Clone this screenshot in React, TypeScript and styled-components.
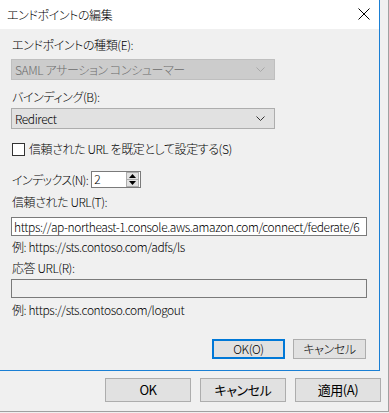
import React from 'react';
import styled, { createGlobalStyle } from 'styled-components';

const GlobalStyle = createGlobalStyle`
  html, body {
    margin: 0;
    padding: 0;
    background: #f0f0f0;
  }
  body {
    font-family: 'Noto Sans CJK JP', 'Noto Sans', sans-serif;
    font-size: 12px;
    font-weight: 300;
    letter-spacing: -0.4px;
    color: #000;
    font-feature-settings: 'palt';
  }
`;

const Screen = styled.div`
  width: 389px;
  height: 413px;
  overflow: hidden;
  background: #f0f0f0;
`;

const ParentWindow = styled.div`
  box-sizing: border-box;
  width: 389px;
  height: 412px;
  border-right: 1px solid #a0a0a0;
  border-bottom: 1px solid #a0a0a0;
  display: flex;
  flex-direction: column;
`;

const Dialog = styled.div`
  box-sizing: border-box;
  width: 380px;
  height: 371px;
  border-right: 1px solid #1a7fd4;
  border-bottom: 1px solid #1a7fd4;
  display: flex;
  flex-direction: column;
  background: #f0f0f0;
`;

const TitleBar = styled.div`
  height: 29px;
  background: #fff;
  display: flex;
  align-items: center;
  justify-content: space-between;
  padding: 0 7px 0 7px;
`;

const Title = styled.span`
  font-size: 12px;
  line-height: 16px;
`;

const CloseButton = styled.span`
  display: flex;
  width: 12px;
  height: 12px;
  margin-right: 2px;
  margin-top: -1px;
`;

const Body = styled.div`
  flex: 1;
  display: flex;
  flex-direction: column;
  padding: 0 12px 0 11px;
`;

const Label = styled.div<{ $top: number }>`
  margin-top: ${(p) => p.$top}px;
  padding-left: 1px;
  height: 16px;
  line-height: 16px;
  white-space: nowrap;
`;

const Combo = styled.div<{ $top: number; $disabled?: boolean }>`
  box-sizing: border-box;
  margin-top: ${(p) => p.$top}px;
  width: 264px;
  height: 21px;
  border: 1px solid ${(p) => (p.$disabled ? '#bfbfbf' : '#adadad')};
  background: ${(p) => (p.$disabled ? '#cccccc' : '#e1e1e1')};
  color: ${(p) => (p.$disabled ? '#6d6d6d' : '#000')};
  display: flex;
  align-items: center;
  justify-content: space-between;
  padding: 0 9px 0 3px;
  line-height: 18px;
  white-space: nowrap;
`;

const CheckRow = styled.label`
  margin-top: 12px;
  height: 16px;
  display: flex;
  align-items: center;
  gap: 4px;
  padding-left: 1px;
  line-height: 16px;
`;

const CheckBox = styled.span`
  box-sizing: border-box;
  width: 13px;
  height: 13px;
  border: 1px solid #333;
  background: #fff;
`;

const IndexRow = styled.div`
  margin-top: 14px;
  display: flex;
  align-items: center;
  gap: 3px;
  padding-left: 1px;
  line-height: 16px;
`;

const IndexLabel = styled.span`
  white-space: nowrap;
  letter-spacing: -0.6px;
`;

const Spin = styled.div`
  box-sizing: border-box;
  width: 50px;
  height: 17px;
  border: 1px solid #7a7a7a;
  background: #fff;
  display: flex;
  justify-content: space-between;
  padding: 0 1px 0 2px;
  line-height: 14px;
`;

const SpinButtons = styled.div`
  box-sizing: border-box;
  width: 13px;
  height: 15px;
  border: 1px solid #adadad;
  background: #e1e1e1;
  display: flex;
  flex-direction: column;
`;

const SpinHalf = styled.div<{ $down?: boolean }>`
  flex: 1;
  display: flex;
  align-items: center;
  justify-content: center;
  border-top: ${(p) => (p.$down ? '1px solid #adadad' : 'none')};
`;

const TextBox = styled.div<{ $top: number; $empty?: boolean }>`
  box-sizing: border-box;
  margin-top: ${(p) => p.$top}px;
  width: 356px;
  height: 19px;
  border: 1px solid #7a7a7a;
  background: ${(p) => (p.$empty ? '#f0f0f0' : '#fff')};
  padding: 0 2px;
  line-height: 17px;
  white-space: nowrap;
  overflow: hidden;
`;

const ButtonRow = styled.div<{ $top: number; $gap: number; $right: number }>`
  margin-top: ${(p) => p.$top}px;
  display: flex;
  justify-content: flex-end;
  gap: ${(p) => p.$gap}px;
  padding-right: ${(p) => p.$right}px;
`;

const Button = styled.button<{ $w: number; $h: number; $default?: boolean; $strong?: boolean }>`
  box-sizing: border-box;
  width: ${(p) => p.$w}px;
  height: ${(p) => p.$h}px;
  margin: 0;
  padding: 0;
  font: inherit;
  font-weight: ${(p) => (p.$strong ? 400 : 300)};
  font-size: ${(p) => (p.$strong ? 13 : 12)}px;
  letter-spacing: inherit;
  color: #000;
  background: #e1e1e1;
  border: ${(p) => (p.$default ? '2px solid #0078d7' : '1px solid #adadad')};
  display: flex;
  align-items: center;
  justify-content: center;
  line-height: 16px;
`;

const Chevron = ({ color }: { color: string }) => (
  <svg width="9" height="5" viewBox="0 0 9 5">
    <polyline points="0.5,0.5 4.5,4.5 8.5,0.5" fill="none" stroke={color} strokeWidth="1" />
  </svg>
);

const App = () => {
  return (
    <Screen>
      <GlobalStyle />
      <ParentWindow>
        <Dialog>
          <TitleBar>
            <Title>エンドポイントの編集</Title>
            <CloseButton>
              <svg width="12" height="12" viewBox="0 0 12 12">
                <path d="M0.5 0.5 L11.5 11.5 M11.5 0.5 L0.5 11.5" stroke="#000" strokeWidth="1" />
              </svg>
            </CloseButton>
          </TitleBar>
          <Body>
            <Label $top={8}>エンドポイントの種類(E):</Label>
            <Combo $top={6} $disabled>
              <span>SAML アサーション コンシューマー</span>
              <Chevron color="#a8a8a8" />
            </Combo>
            <Label $top={9}>バインディング(B):</Label>
            <Combo $top={3}>
              <span>Redirect</span>
              <Chevron color="#333" />
            </Combo>
            <CheckRow>
              <CheckBox />
              <span>信頼された URL を既定として設定する(S)</span>
            </CheckRow>
            <IndexRow>
              <IndexLabel>インデックス(N):</IndexLabel>
              <Spin>
                <span>2</span>
                <SpinButtons>
                  <SpinHalf>
                    <svg width="7" height="4" viewBox="0 0 7 4">
                      <polygon points="3.5,0 7,4 0,4" fill="#000" />
                    </svg>
                  </SpinHalf>
                  <SpinHalf $down>
                    <svg width="7" height="4" viewBox="0 0 7 4">
                      <polygon points="0,0 7,0 3.5,4" fill="#000" />
                    </svg>
                  </SpinHalf>
                </SpinButtons>
              </Spin>
            </IndexRow>
            <Label $top={6}>信頼された URL(T):</Label>
            <TextBox $top={7}>https://ap-northeast-1.console.aws.amazon.com/connect/federate/6</TextBox>
            <Label $top={3}>例: https://sts.contoso.com/adfs/ls</Label>
            <Label $top={5}>応答 URL(R):</Label>
            <TextBox $top={3} $empty />
            <Label $top={4}>例: https://sts.contoso.com/logout</Label>
            <ButtonRow $top={21} $gap={8} $right={1}>
              <Button $w={73} $h={20} $default>OK(O)</Button>
              <Button $w={73} $h={20}>キャンセル</Button>
            </ButtonRow>
          </Body>
        </Dialog>
        <ButtonRow $top={7} $gap={9} $right={7}>
          <Button $w={86} $h={24} $strong>OK</Button>
          <Button $w={86} $h={24} $strong>キャンセル</Button>
          <Button $w={86} $h={24} $strong>適用(A)</Button>
        </ButtonRow>
      </ParentWindow>
    </Screen>
  );
};

export default App;
